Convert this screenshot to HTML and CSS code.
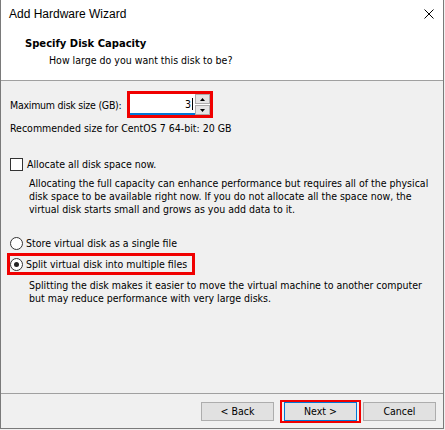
FILE: index.html
```html
<!DOCTYPE html>
<html>
<head>
<meta charset="utf-8">
<link rel="stylesheet" href="styles.css">
</head>
<body>
<div class="window">
  <div class="titlebar">
    <span class="title">Add Hardware Wizard</span>
    <svg class="close" width="10" height="10" viewBox="0 0 10 10"><path d="M0.5 0.5 L9.5 9.5 M9.5 0.5 L0.5 9.5" stroke="#000" stroke-width="1" fill="none"/></svg>
  </div>
  <div class="header">
    <div class="h-title">Specify Disk Capacity</div>
    <div class="h-sub">How large do you want this disk to be?</div>
  </div>
  <div class="content">
    <div class="size-row">
      <span class="label">Maximum disk size (GB):</span>
      <div class="hl-input">
        <div class="spin-field"><span class="val">3</span><i class="caret"></i></div>
        <div class="spin-btns">
          <div class="spin-btn"><svg width="5" height="3" viewBox="0 0 5 3"><path d="M0 3 L2.5 0 L5 3 Z" fill="#000"/></svg></div>
          <div class="spin-btn"><svg width="5" height="3" viewBox="0 0 5 3"><path d="M0 0 L5 0 L2.5 3 Z" fill="#000"/></svg></div>
        </div>
      </div>
    </div>
    <div class="rec">Recommended size for CentOS 7 64-bit: 20 GB</div>
    <div class="opt check-row"><span class="checkbox"></span><span>Allocate all disk space now.</span></div>
    <p class="desc desc1">Allocating the full capacity can enhance performance but requires all of the physical<br>disk space to be available right now. If you do not allocate all the space now, the<br>virtual disk starts small and grows as you add data to it.</p>
    <div class="opt radio-row"><span class="radio"></span><span>Store virtual disk as a single file</span></div>
    <div class="hl-split">
      <div class="opt"><span class="radio on"></span><span>Split virtual disk into multiple files</span></div>
    </div>
    <p class="desc desc2">Splitting the disk makes it easier to move the virtual machine to another computer<br>but may reduce performance with very large disks.</p>
  </div>
  <div class="footer">
    <button class="btn">&lt; Back</button>
    <div class="hl-next"><button class="btn next">Next &gt;</button></div>
    <button class="btn cancel">Cancel</button>
  </div>
</div>
</body>
</html>
```
FILE: styles.css
```css
html, body {
  margin: 0;
  padding: 0;
  background: #f0f0f0;
}
body {
  font-family: "DejaVu Sans", "Liberation Sans", sans-serif;
  font-stretch: condensed;
  font-size: 10.5px;
  color: #000;
}
.window {
  width: 444px;
  height: 429px;
  box-sizing: border-box;
  border: 1px solid #7a7a7a;
  border-top: none;
  background: #f0f0f0;
  display: flex;
  flex-direction: column;
}
.titlebar {
  height: 28px;
  background: #fff;
  display: flex;
  align-items: center;
  padding-left: 8px;
  padding-right: 9px;
}
.title {
  font-family: "Liberation Sans", sans-serif;
  font-stretch: normal;
  font-size: 12px;
  flex: 1;
}
.close {
  display: block;
}
.header {
  background: #fff;
  height: 53px;
  box-sizing: border-box;
  padding: 9px 0 0 24px;
  border-bottom: 1px solid #a0a0a0;
}
.h-title {
  font-weight: bold;
  font-stretch: normal;
  font-size: 10px;
  line-height: 14px;
}
.h-sub {
  line-height: 14px;
  margin-top: 2px;
  margin-left: 24px;
}
.content {
  flex: 1;
  padding: 10px 0 0 9px;
}
.size-row {
  display: grid;
  grid-template-columns: 117px 86px;
  align-items: center;
  height: 27px;
}
.label {
  letter-spacing: -0.25px;
  white-space: nowrap;
}
.hl-input {
  box-sizing: border-box;
  width: 86px;
  height: 27px;
  border: 3px solid #f00000;
  display: flex;
}
.spin-field {
  width: 65px;
  background: #fff;
  border-bottom: 2px solid #0078d7;
  box-sizing: border-box;
  display: flex;
  align-items: center;
  justify-content: flex-end;
  padding-right: 2px;
}
.val {
  line-height: 12px;
}
.caret {
  display: block;
  width: 1px;
  height: 12px;
  background: #000;
  margin-left: 1px;
}
.spin-btns {
  width: 15px;
  display: flex;
  flex-direction: column;
  gap: 1px;
  background: #fff;
}
.spin-btn {
  flex: 1;
  box-sizing: border-box;
  border: 1px solid #adadad;
  background: #e5e5e5;
  display: flex;
  align-items: center;
  justify-content: center;
}
.spin-btn svg { display: block; }
.rec {
  line-height: 13px;
  margin-top: 4px;
}
.opt {
  display: flex;
  align-items: center;
  line-height: 13px;
  height: 13px;
  white-space: nowrap;
}
.check-row {
  margin-top: 23px;
}
.checkbox {
  width: 13px;
  height: 13px;
  box-sizing: border-box;
  border: 1px solid #333;
  background: #fff;
  margin-right: 4px;
}
.radio {
  width: 13px;
  height: 13px;
  box-sizing: border-box;
  border: 1px solid #333;
  border-radius: 50%;
  background: #fff;
  margin-right: 3px;
  display: flex;
  align-items: center;
  justify-content: center;
}
.radio.on::after {
  content: "";
  width: 5px;
  height: 5px;
  border-radius: 50%;
  background: #222;
}
.desc {
  margin: 0;
  line-height: 13px;
  white-space: nowrap;
  padding-left: 19px;
}
.desc1 {
  margin-top: 6px;
}
.radio-row {
  margin-top: 21px;
}
.hl-split {
  box-sizing: border-box;
  width: 188px;
  height: 22px;
  margin-top: 3px;
  margin-left: -3px;
  border: 3px solid #f00000;
  display: flex;
  align-items: center;
}
.desc2 {
  margin-top: 4px;
}
.footer {
  height: 34px;
  border-top: 1px solid #a0a0a0;
  display: flex;
  align-items: center;
  justify-content: flex-end;
  padding: 0 7px 0 0;
}
.btn {
  width: 73px;
  height: 19px;
  box-sizing: border-box;
  border: 1px solid #adadad;
  background: #e1e1e1;
  font-family: inherit;
  font-stretch: condensed;
  font-size: 10.5px;
  color: #000;
  padding: 0;
  margin: 0;
}
.btn.next {
  border-color: #0078d7;
}
.hl-next {
  box-sizing: border-box;
  border: 2px solid #f00000;
  padding: 0 2px;
  height: 23px;
  margin-left: 6px;
  display: flex;
}
.cancel {
  margin-left: 2px;
}
```
